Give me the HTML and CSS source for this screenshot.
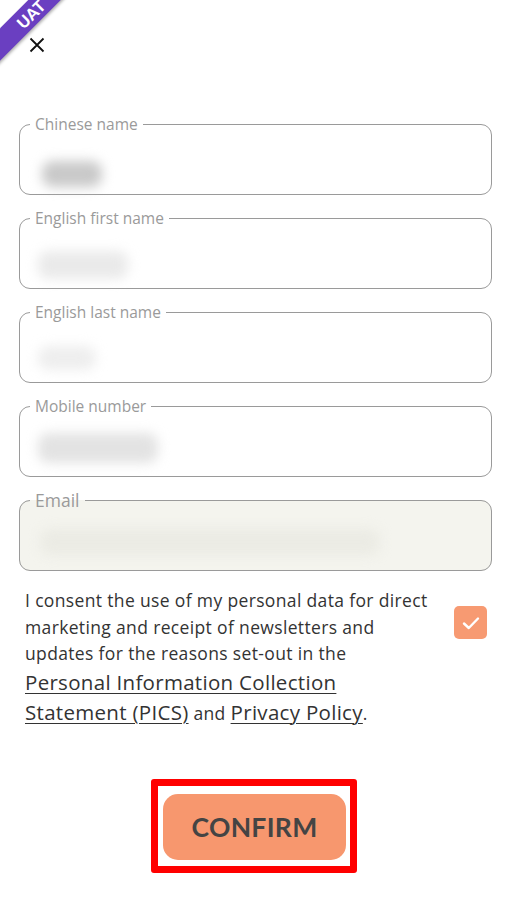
FILE: index.html
```html
<!DOCTYPE html>
<html>
<head>
<meta charset="utf-8">
<link rel="stylesheet" href="styles.css">
</head>
<body>
<div class="ribbon"><span>UAT</span></div>
<div class="page">
  <header class="topbar">
    <svg class="close" width="16" height="16" viewBox="0 0 16 16"><path d="M1.5 1.5 L14.5 14.5 M14.5 1.5 L1.5 14.5" stroke="#111" stroke-width="1.8" fill="none"/></svg>
  </header>
  <form class="form">
    <fieldset class="field">
      <legend>Chinese name</legend>
      <div class="blur b1"></div>
    </fieldset>
    <fieldset class="field">
      <legend>English first name</legend>
      <div class="blur b2"></div>
    </fieldset>
    <fieldset class="field">
      <legend>English last name</legend>
      <div class="blur b3"></div>
    </fieldset>
    <fieldset class="field">
      <legend>Mobile number</legend>
      <div class="blur b4"></div>
    </fieldset>
    <fieldset class="field disabled">
      <legend class="big">Email</legend>
      <div class="blur b5"></div>
    </fieldset>
    <div class="consent">
      <p>I consent the use of my personal data for direct<br>marketing and receipt of newsletters and<br>updates for the reasons set-out in the<br><a class="lnk">Personal Information Collection <br>Statement (PICS)</a> and <a class="lnk">Privacy Policy</a>.</p>
      <div class="check"><svg width="18" height="14" viewBox="0 0 18 14"><path d="M2 7.5 L6.8 12 L16 2.5" stroke="#fff" stroke-width="2.4" fill="none" stroke-linecap="round" stroke-linejoin="round"/></svg></div>
    </div>
    <div class="actions">
      <div class="frame"><button type="button" class="confirm">CONFIRM</button></div>
    </div>
  </form>
</div>
</body>
</html>
```
FILE: styles.css
```css
html, body { margin: 0; padding: 0; background: #fff; }
body { font-family: "Open Sans", "Noto Sans", sans-serif; color: #333; width: 512px; height: 899px; overflow: hidden; position: relative; }
.ribbon { position: absolute; left: -35px; top: 3px; width: 130px; height: 23px; background: #6a3fc1; transform: rotate(-45deg); transform-origin: center; display: flex; align-items: center; justify-content: center; box-shadow: 0 2px 3px rgba(0,0,0,0.3); z-index: 5; }
.ribbon span { color: #fff; font-family: "Lato", sans-serif; font-weight: 900; font-size: 16px; letter-spacing: 0.5px; margin-left: 2px; }
.page { padding: 0 20px 0 19px; }
.topbar { height: 115px; display: flex; align-items: flex-start; padding-top: 37px; padding-left: 10px; box-sizing: border-box; }
.close { display: block; }
.form { display: flex; flex-direction: column; }
.field { margin: 0 0 14px 0; border: 1.5px solid #9a9a9a; border-radius: 11px; height: 80px; box-sizing: border-box; padding: 0 0 0 10px; position: relative; }
.field legend { font-size: 15.5px; color: #9a9a9a; padding: 0 5px 0 5px; margin-left: 0; line-height: 18px; }
.field legend.big { font-size: 17.5px; }
.field.disabled { background: #f4f4ee; }
.blur { position: absolute; background: #ddd; filter: blur(6px); border-radius: 10px; }
.b1 { left: 22px; top: 28px; width: 60px; height: 26px; background: #c9c9c9; }
.b2 { left: 18px; top: 24px; width: 90px; height: 28px; background: #eaeaea; }
.b3 { left: 18px; top: 25px; width: 58px; height: 24px; background: #eeeeee; }
.b4 { left: 18px; top: 18px; width: 120px; height: 30px; background: #e3e3e3; }
.b5 { left: 20px; top: 20px; width: 340px; height: 26px; background: #ebebe4; }
.consent { display: flex; align-items: flex-start; padding: 2px 5px 0 6px; }
.consent p { margin: 0; flex: 1; font-size: 17.5px; letter-spacing: 0.35px; line-height: 26.5px; color: #333; white-space: nowrap; }
.lnk { font-size: 20.5px; letter-spacing: 0.3px; text-decoration: underline; text-decoration-thickness: 1px; text-underline-offset: 3px; color: #333; line-height: 30px; }
.check { width: 33px; height: 33px; border-radius: 5px; background: #f79a72; display: flex; align-items: center; justify-content: center; margin-top: 19px; flex: none; }
.actions { display: flex; justify-content: center; margin-top: 52px; }
.frame { border: 7px solid #ff0000; border-radius: 3px; padding: 8px 4px 6px 5px; margin-left: -3px; }
.confirm { width: 183px; height: 66px; border: none; border-radius: 15px; background: #f7976e; color: #444; font-family: "Lato", sans-serif; font-weight: 700; font-size: 26.5px; letter-spacing: 0.3px; display: block; }
```
